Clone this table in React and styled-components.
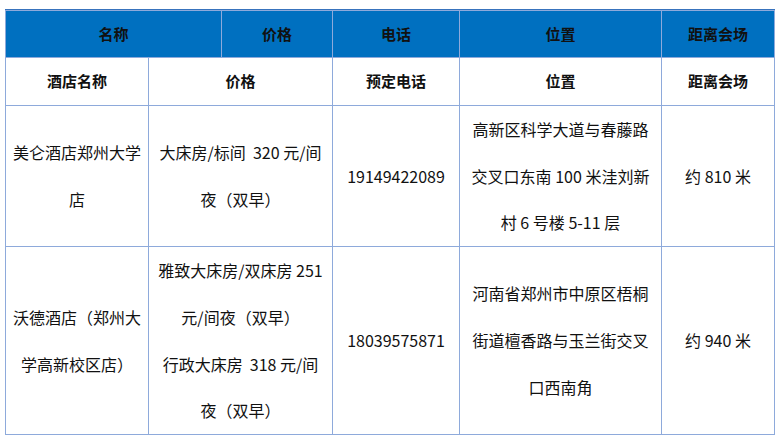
import React from 'react';
import styled, { createGlobalStyle } from 'styled-components';

const GlobalStyle = createGlobalStyle`
  html, body {
    margin: 0;
    padding: 0;
    background: #fff;
  }
  body {
    font-family: "Noto Sans CJK SC", "Noto Sans", sans-serif;
    color: #111;
  }
`;

const Page = styled.div`
  padding: 9px 0 0 5px;
`;

const Table = styled.div`
  display: grid;
  width: max-content;
  grid-template-columns: 142px 72px 110px 126px 201px 112px;
  grid-template-rows: 46px 47px 140px 187px;
  gap: 1px;
  padding: 1px;
  background: #8eaadb;
  border-top: 1px solid #3873bd;
`;

const Cell = styled.div`
  grid-column: span ${p => p.$span || 1};
  background: ${p => (p.$head ? '#0070c0' : '#fff')};
  display: flex;
  align-items: center;
  justify-content: center;
  text-align: center;
  padding: 0 5px;
  font-size: ${p => (p.$bold ? '15px' : '16px')};
  font-weight: ${p => (p.$bold ? 700 : 400)};
  line-height: 46.7px;
  color: #111;
  white-space: nowrap;
`;

const Lines = ({ lines }) => (
  <div>
    {lines.map((l, i) => (
      <React.Fragment key={i}>
        {i > 0 && <br />}
        {l}
      </React.Fragment>
    ))}
  </div>
);

const header = [
  { text: '名称', span: 2 },
  { text: '价格' },
  { text: '电话' },
  { text: '位置' },
  { text: '距离会场' },
];

const subHeader = [
  { text: '酒店名称' },
  { text: '价格', span: 2 },
  { text: '预定电话' },
  { text: '位置' },
  { text: '距离会场' },
];

const hotels = [
  {
    name: ['美仑酒店郑州大学', '店'],
    price: ['大床房/标间\u00a0 320 元/间', '夜（双早）'],
    phone: '19149422089',
    place: ['高新区科学大道与春藤路', '交叉口东南 100 米洼刘新', '村 6 号楼 5-11 层'],
    distance: '约 810 米',
  },
  {
    name: ['沃德酒店（郑州大', '学高新校区店）'],
    price: ['雅致大床房/双床房 251', '元/间夜（双早）', '行政大床房\u00a0 318 元/间', '夜（双早）'],
    phone: '18039575871',
    place: ['河南省郑州市中原区梧桐', '街道檀香路与玉兰街交叉', '口西南角'],
    distance: '约 940 米',
  },
];

export default function App() {
  return (
    <Page>
      <GlobalStyle />
      <Table>
        {header.map(h => (
          <Cell key={'h' + h.text} $span={h.span} $head $bold>
            {h.text}
          </Cell>
        ))}
        {subHeader.map(h => (
          <Cell key={'s' + h.text} $span={h.span} $bold>
            {h.text}
          </Cell>
        ))}
        {hotels.map(h => (
          <React.Fragment key={h.phone}>
            <Cell><Lines lines={h.name} /></Cell>
            <Cell $span={2}><Lines lines={h.price} /></Cell>
            <Cell>{h.phone}</Cell>
            <Cell><Lines lines={h.place} /></Cell>
            <Cell>{h.distance}</Cell>
          </React.Fragment>
        ))}
      </Table>
    </Page>
  );
}
